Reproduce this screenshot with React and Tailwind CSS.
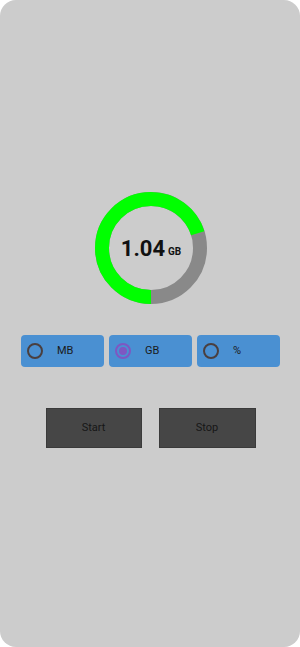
import React, { useState } from "react";

const R = 49;
const C = 2 * Math.PI * R;

const Ring = ({ pct = 0.7 }) => (
  <div className="relative w-[112px] h-[112px] ml-[2px]">
    <svg width="112" height="112" viewBox="0 0 112 112" className="absolute inset-0">
      <circle cx="56" cy="56" r={R} fill="none" stroke="#898989" strokeWidth="14" />
      <circle
        cx="56"
        cy="56"
        r={R}
        fill="none"
        stroke="#00ff00"
        strokeWidth="14"
        strokeDasharray={`${C * pct} ${C}`}
        transform="rotate(90 56 56)"
      />
    </svg>
    <div className="absolute inset-0 flex items-center justify-center pt-[1px]">
      <span className="text-[22px] font-bold text-[#111] leading-none">1.04</span>
      <span className="text-[10px] font-bold text-[#111] leading-none ml-[3px] mt-[6px]">GB</span>
    </div>
  </div>
);

const Radio = ({ label, checked, onClick }) => (
  <button
    onClick={onClick}
    className="flex items-center h-[32px] rounded-[4px] bg-[#4a90d2] pl-[6px] text-left"
  >
    <span
      className={
        checked
          ? "w-[16px] h-[16px] rounded-full border-2 border-[#7e57c2] flex items-center justify-center"
          : "w-[16px] h-[16px] rounded-full border-2 border-[#4a3f3f]"
      }
    >
      {checked && <span className="w-[8px] h-[8px] rounded-full bg-[#7e57c2]" />}
    </span>
    <span className="ml-[14px] text-[11px] text-[#1a1a1a]">{label}</span>
  </button>
);

export default function App() {
  const [unit, setUnit] = useState("GB");
  return (
    <div className="w-[300px] h-[647px] bg-white">
      <div
        className="w-full h-full bg-[#cccccc] rounded-[16px] flex flex-col items-center pt-[192px]"
        style={{ fontFamily: "Roboto, 'Noto Sans', sans-serif" }}
      >
        <Ring />
        <div className="w-full grid grid-cols-3 gap-[5px] pl-[21px] pr-[20px] mt-[31px]">
          {["MB", "GB", "%"].map((u) => (
            <Radio key={u} label={u} checked={unit === u} onClick={() => setUnit(u)} />
          ))}
        </div>
        <div className="flex gap-[17px] mt-[41px] ml-[1px]">
          <button className="w-[96px] h-[40px] bg-[#464646] border border-[#3a3a3a] text-[11px] text-[#161616]">
            Start
          </button>
          <button className="w-[97px] h-[40px] bg-[#464646] border border-[#3a3a3a] text-[11px] text-[#161616]">
            Stop
          </button>
        </div>
      </div>
    </div>
  );
}
